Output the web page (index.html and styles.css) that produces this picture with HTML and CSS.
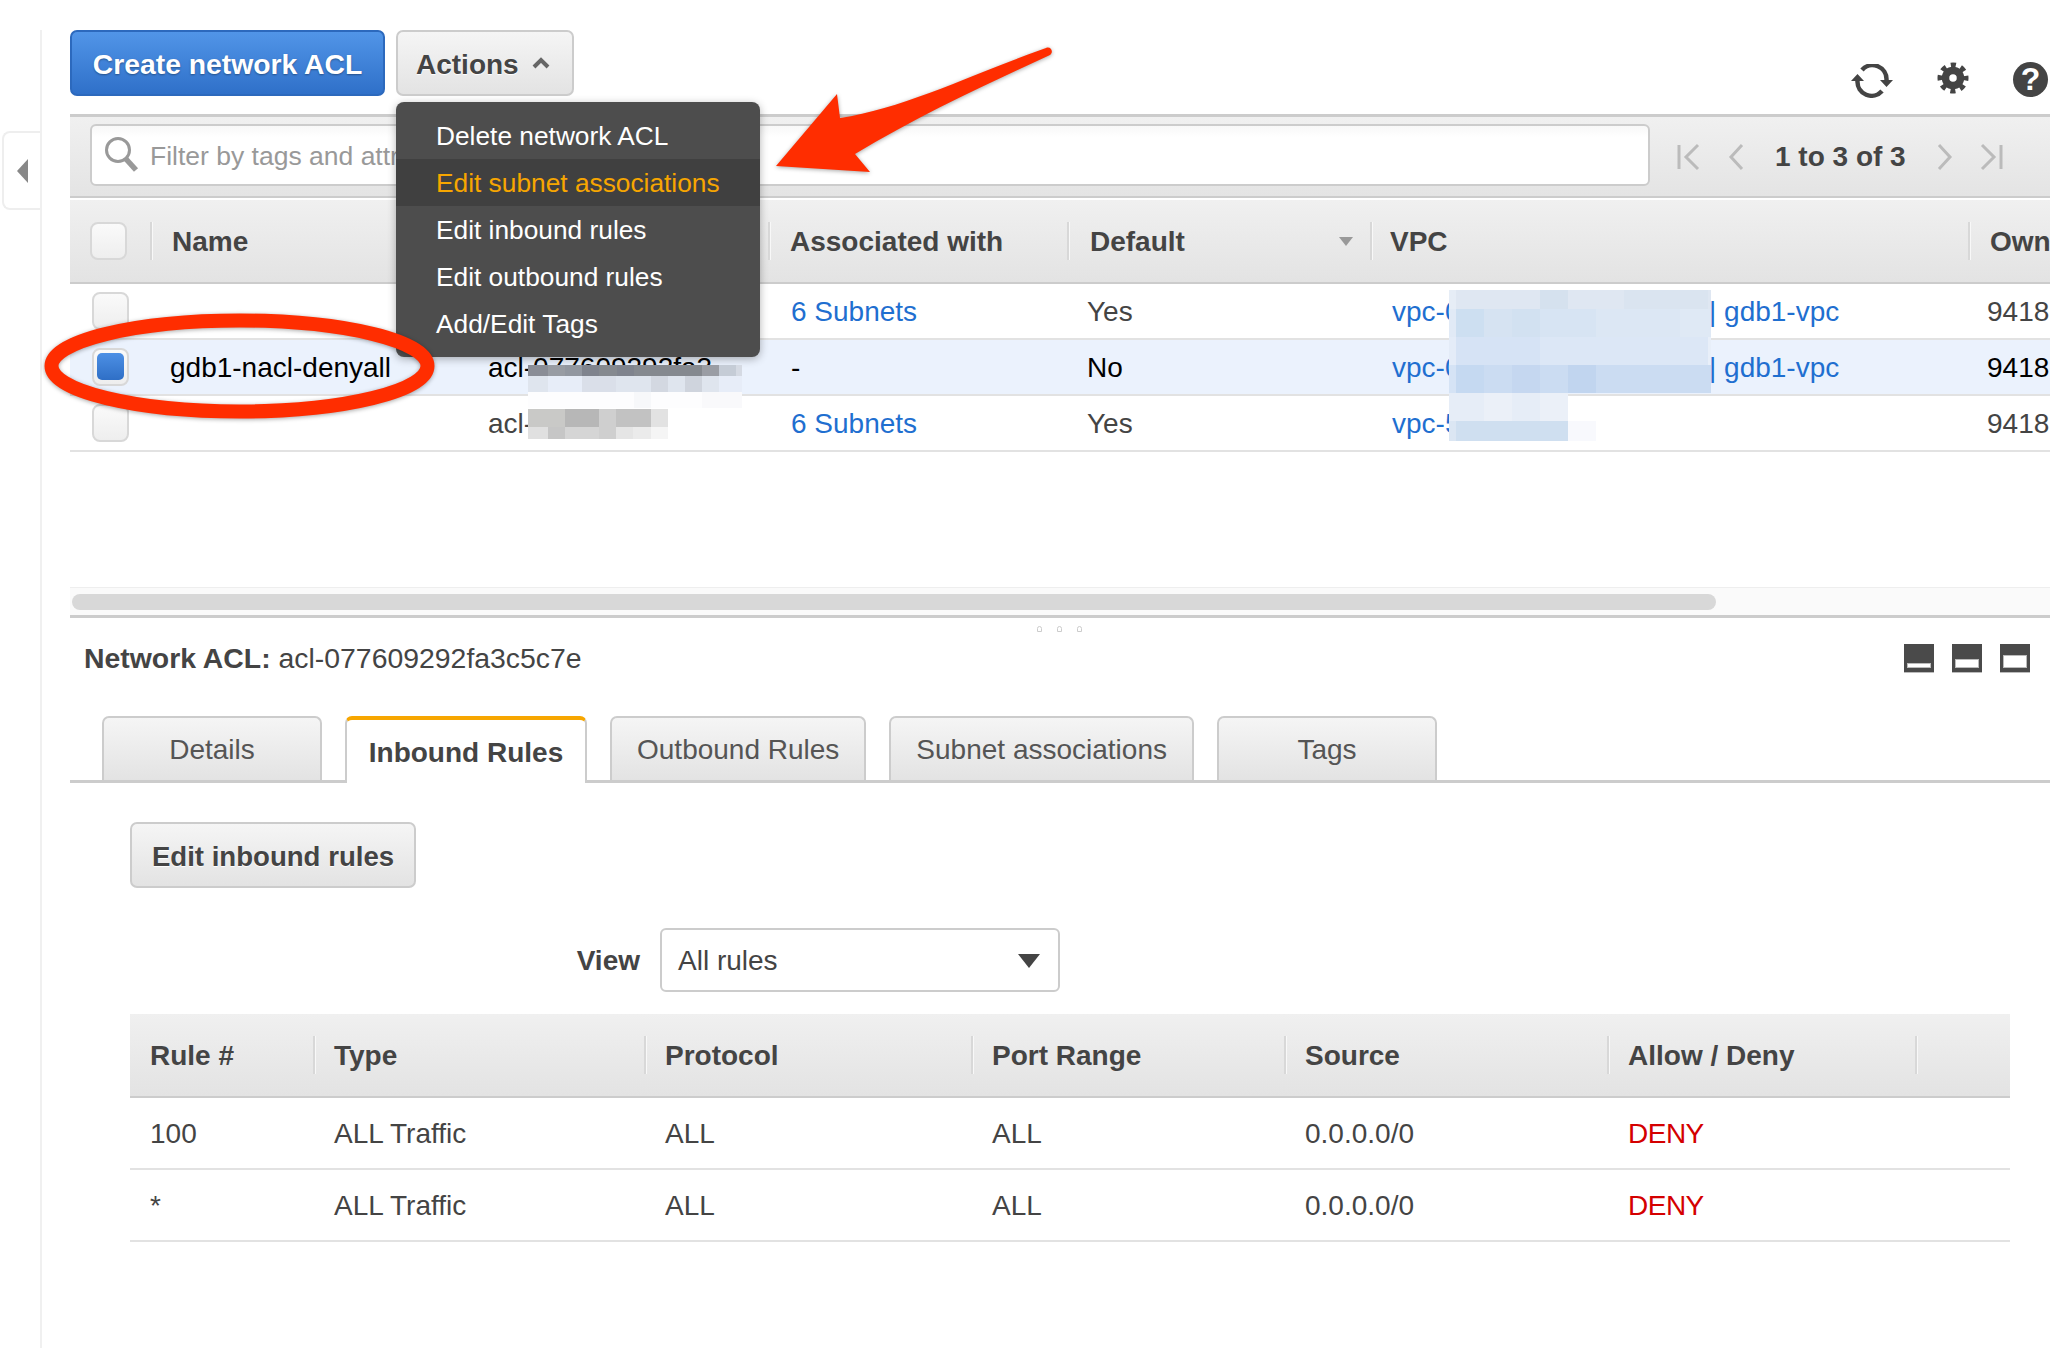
FILE: index.html
```html
<!DOCTYPE html>
<html lang="en">
<head>
  <meta charset="UTF-8">
  <title>Network ACLs</title>
  <link rel="stylesheet" href="styles.css">
</head>
<body>

  <div class="page">
    <aside class="rail">
      <div class="rail-tab"><span class="rail-caret"></span></div>
    </aside>

    <main class="main">
      <div class="top-row">
        <button class="btn btn-primary">Create network ACL</button>
        <div class="actions-wrap">
          <button class="btn btn-actions">Actions
            <svg class="actions-caret" width="18" height="12" viewBox="0 0 18 12"><path d="M2 10 L9 3 L16 10" fill="none" stroke="#666" stroke-width="4"/></svg>
          </button>
          <ul class="menu">
            <li>Delete network ACL</li>
            <li class="menu-active">Edit subnet associations</li>
            <li>Edit inbound rules</li>
            <li>Edit outbound rules</li>
            <li>Add/Edit Tags</li>
          </ul>
        </div>
        <div class="top-icons">
          <svg class="icon-refresh" width="42" height="34" viewBox="0 0 42 34">
            <path d="M6.5 17 A14 14 0 0 0 31 27" fill="none" stroke="#444" stroke-width="4.5"/>
            <path d="M35.5 16 A14 14 0 0 0 11 6" fill="none" stroke="#444" stroke-width="4.5"/>
            <path d="M0 17 L13 17 L6.5 10 Z M29 16 L42 16 L35.5 23 Z" fill="#444"/>
          </svg>
          <svg width="32" height="32" viewBox="0 0 32 32">
            <circle cx="16" cy="16" r="7.5" fill="none" stroke="#444" stroke-width="7.5"/>
            <circle cx="16" cy="16" r="13" fill="none" stroke="#444" stroke-width="5" stroke-dasharray="5.1 5.1" stroke-dashoffset="2.55"/>
          </svg>
          <span class="help-icon">?</span>
        </div>
      </div>

      <div class="filter-bar">
        <div class="filter-box">
          <svg width="36" height="36" viewBox="0 0 36 36">
            <circle cx="14" cy="13" r="11.5" fill="none" stroke="#999" stroke-width="3"/>
            <path d="M22 22 L32 33" stroke="#999" stroke-width="5.5"/>
          </svg>
          <span class="filter-text">Filter by tags and attr</span>
        </div>
        <div class="pager">
          <svg width="24" height="28" viewBox="0 0 24 28"><path d="M2 2 V26 M21 2 L9 14 L21 26" fill="none" stroke="#bbb" stroke-width="3"/></svg>
          <svg class="pager-prev" width="16" height="28" viewBox="0 0 16 28"><path d="M14 2 L3 14 L14 26" fill="none" stroke="#bbb" stroke-width="3"/></svg>
          <span class="pager-text">1 to 3 of 3</span>
          <svg class="pager-next" width="16" height="28" viewBox="0 0 16 28"><path d="M2 2 L13 14 L2 26" fill="none" stroke="#bbb" stroke-width="3"/></svg>
          <svg width="24" height="28" viewBox="0 0 24 28"><path d="M3 2 L15 14 L3 26 M22 2 V26" fill="none" stroke="#bbb" stroke-width="3"/></svg>
        </div>
      </div>

      <div class="acl-wrap">
        <table class="data-table acl-table">
          <colgroup>
            <col class="w80"><col class="w318"><col class="w300"><col class="w299"><col class="w303"><col class="w598"><col class="w200">
          </colgroup>
          <thead>
            <tr>
              <th class="no-rule"><span class="check"></span></th>
              <th>Name</th>
              <th></th>
              <th>Associated with</th>
              <th>Default<span class="sort-caret"></span></th>
              <th>VPC</th>
              <th>Own</th>
            </tr>
          </thead>
          <tbody>
            <tr>
              <td><span class="check"></span></td>
              <td></td>
              <td></td>
              <td><a class="link">6 Subnets</a></td>
              <td>Yes</td>
              <td><a class="link"><span class="vpc-id">vpc-0</span>| gdb1-vpc</a></td>
              <td>9418</td>
            </tr>
            <tr class="row-selected">
              <td><span class="check"><span class="check-mark"></span></span></td>
              <td>gdb1-nacl-denyall</td>
              <td>acl-077609292fa3</td>
              <td>-</td>
              <td>No</td>
              <td><a class="link"><span class="vpc-id">vpc-0</span>| gdb1-vpc</a></td>
              <td>9418</td>
            </tr>
            <tr>
              <td><span class="check"></span></td>
              <td></td>
              <td>acl-</td>
              <td><a class="link">6 Subnets</a></td>
              <td>Yes</td>
              <td><a class="link"><span class="vpc-id">vpc-5</span></a></td>
              <td>9418</td>
            </tr>
          </tbody>
        </table>
      </div>

      <div class="scroll-band"><div class="scroll-thumb"></div></div>
      <div class="grabber"><span></span><span></span><span></span></div>

      <div class="detail-head">
        <div class="detail-title"><b>Network ACL:</b> acl-077609292fa3c5c7e</div>
        <div class="pane-icons">
          <span class="pane-icon"><span class="pane-small"></span></span>
          <span class="pane-icon"><span class="pane-mid"></span></span>
          <span class="pane-icon"><span class="pane-big"></span></span>
        </div>
      </div>

      <div class="tabs">
        <div class="tab">Details</div>
        <div class="tab tab-active">Inbound Rules</div>
        <div class="tab">Outbound Rules</div>
        <div class="tab">Subnet associations</div>
        <div class="tab">Tags</div>
      </div>

      <div class="tab-body">
        <button class="btn btn-edit">Edit inbound rules</button>

        <div class="view-row">
          <label class="view-label">View</label>
          <div class="select">All rules<span class="select-caret"></span></div>
        </div>

        <table class="data-table rules-table">
          <colgroup>
            <col class="w183"><col class="w331"><col class="w327"><col class="w313"><col class="w323"><col class="w308"><col class="w95">
          </colgroup>
          <thead>
            <tr>
              <th class="no-rule">Rule #</th>
              <th>Type</th>
              <th>Protocol</th>
              <th>Port Range</th>
              <th>Source</th>
              <th>Allow / Deny</th>
              <th></th>
            </tr>
          </thead>
          <tbody>
            <tr>
              <td>100</td>
              <td>ALL Traffic</td>
              <td>ALL</td>
              <td>ALL</td>
              <td>0.0.0.0/0</td>
              <td class="deny">DENY</td>
              <td></td>
            </tr>
            <tr>
              <td>*</td>
              <td>ALL Traffic</td>
              <td>ALL</td>
              <td>ALL</td>
              <td>0.0.0.0/0</td>
              <td class="deny">DENY</td>
              <td></td>
            </tr>
          </tbody>
        </table>
      </div>
    </main>
  </div>

  <!-- blurred ids and the red markup drawn on top of the screenshot -->
  <svg class="markup" width="2072" height="1348" viewBox="0 0 2072 1348">
    <g shape-rendering="crispEdges">
      <rect x="528" y="365" width="214" height="11" fill="#85898f"/>
      <rect x="528" y="365" width="20" height="11" fill="#8a8d96"/>
      <rect x="548" y="365" width="17" height="11" fill="#989ca3"/>
      <rect x="565" y="365" width="17" height="11" fill="#9297a0"/>
      <rect x="582" y="365" width="17" height="11" fill="#7f838d"/>
      <rect x="617" y="365" width="17" height="11" fill="#7f838d"/>
      <rect x="702" y="365" width="17" height="11" fill="#9a9da4"/>
      <rect x="719" y="365" width="17" height="11" fill="#c5ccd6"/>
      <rect x="736" y="365" width="6" height="11" fill="#d5dae3"/>
      <rect x="528" y="376" width="214" height="16" fill="#dfe5ee"/>
      <rect x="548" y="376" width="34" height="16" fill="#e7edf8"/>
      <rect x="582" y="376" width="34" height="16" fill="#dadfe9"/>
      <rect x="651" y="376" width="17" height="16" fill="#d3d8e1"/>
      <rect x="685" y="376" width="17" height="16" fill="#cfd4dd"/>
      <rect x="719" y="376" width="23" height="16" fill="#e7edf8"/>
      <rect x="528" y="392" width="214" height="16" fill="#fdfdfe"/>
      <rect x="634" y="392" width="17" height="16" fill="#f7f8fa"/>
      <rect x="702" y="392" width="40" height="16" fill="#f9f9fb"/>

      <rect x="528" y="409" width="37" height="18" fill="#c9c9c7"/>
      <rect x="565" y="409" width="34" height="18" fill="#b7b7b7"/>
      <rect x="599" y="409" width="17" height="18" fill="#cfcfcf"/>
      <rect x="616" y="409" width="35" height="18" fill="#c2c2c2"/>
      <rect x="651" y="409" width="17" height="18" fill="#e2e2e2"/>
      <rect x="528" y="427" width="20" height="12" fill="#e0e0e0"/>
      <rect x="548" y="427" width="17" height="12" fill="#c6c6c6"/>
      <rect x="565" y="427" width="34" height="12" fill="#d5d5d5"/>
      <rect x="599" y="427" width="17" height="12" fill="#cfcfcf"/>
      <rect x="616" y="427" width="17" height="12" fill="#e5e5e5"/>
      <rect x="633" y="427" width="18" height="12" fill="#ebebeb"/>
      <rect x="651" y="427" width="17" height="12" fill="#f5f5f5"/>

      <rect x="1449" y="290" width="262" height="19" fill="#dfe7f2"/>
      <rect x="1449" y="290" width="7" height="19" fill="#e6edf6"/>
      <rect x="1540" y="290" width="28" height="19" fill="#d5e1ee"/>
      <rect x="1624" y="290" width="84" height="19" fill="#dae4f0"/>
      <rect x="1449" y="309" width="262" height="28" fill="#dce7f4"/>
      <rect x="1449" y="309" width="7" height="28" fill="#e1eaf6"/>
      <rect x="1456" y="309" width="28" height="28" fill="#cddff1"/>
      <rect x="1484" y="309" width="28" height="28" fill="#d6e3f2"/>
      <rect x="1512" y="309" width="28" height="28" fill="#d2e1f1"/>
      <rect x="1540" y="309" width="56" height="28" fill="#d7e4f3"/>
      <rect x="1680" y="309" width="31" height="28" fill="#dfe9f5"/>
      <rect x="1449" y="337" width="262" height="28" fill="#dce7f6"/>
      <rect x="1449" y="337" width="7" height="28" fill="#e4ecf8"/>
      <rect x="1456" y="337" width="84" height="28" fill="#d6e3f5"/>
      <rect x="1708" y="337" width="3" height="28" fill="#e8eff9"/>
      <rect x="1449" y="365" width="262" height="28" fill="#cbdcf2"/>
      <rect x="1449" y="365" width="7" height="28" fill="#d5e3f5"/>
      <rect x="1456" y="365" width="28" height="28" fill="#c5d9f1"/>
      <rect x="1512" y="365" width="28" height="28" fill="#c5d7f0"/>
      <rect x="1568" y="365" width="28" height="28" fill="#c1d5ef"/>
      <rect x="1449" y="393" width="119" height="28" fill="#e6edf7"/>
      <rect x="1484" y="393" width="28" height="28" fill="#ebf0f8"/>
      <rect x="1540" y="393" width="28" height="28" fill="#ebf0f8"/>
      <rect x="1449" y="421" width="119" height="20" fill="#cfdff0"/>
      <rect x="1449" y="421" width="7" height="20" fill="#dbe6f3"/>
      <rect x="1568" y="421" width="28" height="20" fill="#f8f9fd"/>
    </g>
    <g class="markup-red">
      <ellipse cx="239.5" cy="366" rx="188" ry="45.5" fill="none" stroke="#ff2d00" stroke-width="14"/>
      <path d="M776 166 L870 172 L855 154 C920 115 985 85 1050 55 C1054 52 1051 46 1046 48 C970 75 905 108 840 118 L837 94 Z" fill="#ff2d00"/>
    </g>
  </svg>

</body>
</html>
```

FILE: styles.css
```css
* {
  box-sizing: border-box;
  margin: 0;
  padding: 0;
}
html, body {
  width: 2072px;
  height: 1348px;
  overflow: hidden;
}
body {
  position: relative;
  background: #fff;
  color: #444;
  font-family: "Liberation Sans", Arial, sans-serif;
  font-size: 28px;
}
.page {
  display: flex;
  height: 1348px;
}

/* left rail */
.rail {
  width: 42px;
  margin-top: 30px;
  border-right: 2px solid #f0f0f0;
  flex-shrink: 0;
}
.rail-tab {
  display: flex;
  align-items: center;
  justify-content: center;
  width: 38px;
  height: 79px;
  margin: 101px 0 0 2px;
  background: #fff;
  border: 2px solid #eee;
  border-right: none;
  border-radius: 8px 0 0 8px;
}
.rail-caret {
  width: 0;
  height: 0;
  border-top: 12px solid transparent;
  border-bottom: 12px solid transparent;
  border-right: 11px solid #888;
}

.main {
  width: 1980px;
  margin-left: 28px;
  padding-top: 30px;
}

/* buttons */
.btn {
  height: 66px;
  padding-top: 3px;
  border-radius: 7px;
  font-family: inherit;
  font-size: 28px;
  font-weight: bold;
  cursor: pointer;
}
.btn-primary {
  width: 315px;
  color: #fff;
  font-size: 28.3px;
  background: linear-gradient(#5195e8, #2f70c9);
  border: 2px solid #2c69bd;
  text-shadow: 0 1px 2px rgba(0,0,0,0.35);
}
.btn-actions, .btn-edit {
  color: #444;
  background: linear-gradient(#f5f5f5, #e3e3e3);
  border: 2px solid #ccc;
  text-shadow: 0 1px 1px #fff;
}

/* top row */
.top-row {
  display: flex;
  height: 84px;
}
.actions-wrap {
  position: relative;
  margin-left: 11px;
}
.btn-actions {
  display: flex;
  align-items: center;
  width: 178px;
  padding-left: 18px;
}
.actions-caret {
  margin-left: 13px;
  margin-top: -4px;
}
.menu {
  position: absolute;
  top: 72px;
  left: 0;
  z-index: 5;
  width: 364px;
  height: 255px;
  padding-top: 10px;
  list-style: none;
  background: #4d4d4d;
  border-radius: 8px;
  box-shadow: 0 2px 8px rgba(0,0,0,0.3);
  color: #fff;
  font-size: 26.3px;
}
.menu li {
  height: 47px;
  line-height: 49px;
  padding-left: 40px;
  white-space: nowrap;
}
.menu-active {
  background: #404040;
  color: #f7a600;
}
.top-icons {
  display: flex;
  align-items: flex-start;
  gap: 44px;
  margin-left: auto;
  margin-top: 32px;
  padding-right: 2px;
}
.icon-refresh {
  margin-top: 2px;
}
.help-icon {
  display: block;
  width: 35px;
  height: 35px;
  border-radius: 50%;
  background: #444;
  color: #fff;
  font-size: 32px;
  font-weight: bold;
  line-height: 35px;
  text-align: center;
}

/* filter bar */
.filter-bar {
  display: flex;
  align-items: center;
  height: 84px;
  padding-left: 20px;
  background: linear-gradient(#f0f0f0, #e4e4e4);
  border-top: 3px solid #ccc;
  border-bottom: 2px solid #ccc;
}
.filter-box {
  display: flex;
  align-items: center;
  width: 1560px;
  height: 62px;
  margin-top: -3px;
  padding-left: 12px;
  background: linear-gradient(#f8f8f8, #fff 20%);
  border: 2px solid #ccc;
  border-radius: 6px;
}
.filter-text {
  margin-left: 10px;
  padding-top: 2px;
  color: #999;
  font-size: 26.5px;
}
.pager {
  display: flex;
  align-items: center;
  margin-left: 27px;
}
.pager-prev {
  margin-left: 27px;
}
.pager-text {
  margin: 0 31px 0 31px;
  padding-top: 1px;
  font-weight: bold;
}
.pager-next {
  margin-right: 26px;
}

/* tables */
.data-table {
  table-layout: fixed;
  border-collapse: collapse;
}
.data-table th, .data-table td {
  padding-left: 21px;
  text-align: left;
  white-space: nowrap;
  overflow: hidden;
}
.data-table th {
  position: relative;
  font-weight: bold;
  background: linear-gradient(#f0f0f0, #e3e3e3);
  border-bottom: 2px solid #ccc;
}
.data-table th::before {
  content: "";
  position: absolute;
  left: 0;
  top: 50%;
  width: 2px;
  height: 38px;
  margin-top: -19px;
  background: #d8d8d8;
  border-right: 1px solid #f8f8f8;
}
.data-table th.no-rule::before {
  display: none;
}
.data-table td {
  border-bottom: 2px solid #e2e2e2;
}
.w80 { width: 80px; }
.w318 { width: 318px; }
.w300 { width: 300px; }
.w299 { width: 299px; }
.w303 { width: 303px; }
.w598 { width: 598px; }
.w200 { width: 200px; }
.w183 { width: 183px; }
.w331 { width: 331px; }
.w327 { width: 327px; }
.w313 { width: 313px; }
.w323 { width: 323px; }
.w308 { width: 308px; }
.w95 { width: 95px; }

.acl-wrap {
  height: 387px;
  margin-top: 2px;
  overflow: hidden;
}
.acl-table {
  width: 2098px;
}
.acl-table thead tr {
  height: 83px;
}
.acl-table tbody tr {
  height: 56px;
}
.acl-table th {
  padding-top: 2px;
  padding-left: 22px;
}
.acl-table th:first-child {
  padding-top: 0;
  padding-left: 20px;
}
.acl-table th:nth-child(5) {
  padding-left: 23px;
}
.acl-table th:nth-child(6) {
  padding-left: 20px;
}
.acl-table td {
  padding-top: 2px;
}
.acl-table td:first-child {
  padding-top: 0;
  padding-left: 22px;
}
.acl-table td:nth-child(2) {
  padding-left: 20px;
}
.acl-table td:nth-child(3) {
  padding-left: 20px;
}
.acl-table td:nth-child(4) {
  padding-left: 23px;
}
.acl-table td:nth-child(5) {
  padding-left: 20px;
}
.acl-table td:nth-child(6) {
  padding-left: 22px;
}
.acl-table td:nth-child(7) {
  padding-left: 19px;
}
.acl-table .check {
  vertical-align: middle;
}
.row-selected td {
  background: #ebf2fd;
  color: #000;
}
.link {
  color: #1f6fd0;
}
.vpc-id {
  display: inline-block;
  width: 317px;
}
.sort-caret {
  position: absolute;
  right: 17px;
  top: 37px;
  width: 0;
  height: 0;
  border-left: 7px solid transparent;
  border-right: 7px solid transparent;
  border-top: 9px solid #999;
}
.check {
  display: inline-block;
  position: relative;
  width: 37px;
  height: 38px;
  background: linear-gradient(#fafafa, #eee);
  border: 2px solid #d8d8d8;
  border-radius: 8px;
}
.check-mark {
  display: block;
  width: 27px;
  height: 27px;
  margin: 3px auto;
  border-radius: 5px;
  background: linear-gradient(#4d90e5, #2f6fc6);
}

/* scrollbar and splitter */
.scroll-band {
  height: 31px;
  padding-top: 6px;
  background: #fafafa;
  border-bottom: 3px solid #ccc;
  border-top: 1px solid #eee;
}
.scroll-thumb {
  width: 1644px;
  height: 16px;
  margin-left: 2px;
  background: #d8d8d8;
  border-radius: 8px;
}
.grabber {
  display: flex;
  justify-content: center;
  gap: 15px;
  height: 18px;
  padding: 8px 2px 0 0;
}
.grabber span {
  width: 5px;
  height: 6px;
  border: 1px solid #ccc;
  border-radius: 3px 3px 0 0;
}

/* lower pane */
.detail-head {
  display: flex;
  align-items: center;
  justify-content: space-between;
  height: 44px;
  padding: 0 20px 0 14px;
}
.detail-title {
  font-size: 28.4px;
}
.pane-icons {
  display: flex;
  gap: 18px;
}
.pane-icon {
  display: flex;
  align-items: flex-end;
  justify-content: center;
  width: 30px;
  height: 29px;
  padding-bottom: 4px;
  background: #4a4a4a;
  border-bottom: 1px solid #bbb;
}
.pane-icon span {
  display: block;
  width: 24px;
  background: #fff;
  border: 1px solid #bbb;
}
.pane-small { height: 5px; }
.pane-mid { height: 9px; }
.pane-big { height: 13px; }

.tabs {
  display: flex;
  align-items: flex-end;
  gap: 23px;
  height: 67px;
  margin-top: 36px;
  padding-left: 32px;
  border-bottom: 3px solid #ccc;
}
.tab {
  display: flex;
  align-items: center;
  justify-content: center;
  min-width: 220px;
  height: 64px;
  padding: 2px 25px 0;
  background: linear-gradient(#f5f5f5, #e3e3e3);
  border: 2px solid #ccc;
  border-bottom: none;
  border-radius: 7px 7px 0 0;
  color: #555;
  white-space: nowrap;
}
.tab-active {
  width: 242px;
  min-width: 242px;
  height: 67px;
  margin-bottom: -3px;
  padding: 3px 0 0;
  background: #fff;
  border-top: 4px solid #f7a600;
  color: #444;
  font-weight: bold;
}
.tab-body {
  padding: 39px 0 0 60px;
}
.btn-edit {
  display: block;
  width: 286px;
  font-size: 27.6px;
}
.view-row {
  display: flex;
  align-items: center;
  gap: 20px;
  margin-top: 40px;
}
.view-label {
  width: 510px;
  padding-top: 2px;
  font-weight: bold;
  text-align: right;
}
.select {
  display: flex;
  align-items: center;
  justify-content: space-between;
  width: 400px;
  height: 64px;
  padding: 2px 18px 0 16px;
  border: 2px solid #ccc;
  border-radius: 6px;
}
.select-caret {
  width: 0;
  height: 0;
  border-left: 11px solid transparent;
  border-right: 11px solid transparent;
  border-top: 14px solid #444;
}
.rules-table {
  width: 1880px;
  margin-top: 22px;
}
.rules-table thead tr {
  height: 83px;
}
.rules-table tbody tr {
  height: 72px;
}
.rules-table th:first-child, .rules-table td:first-child {
  padding-left: 20px;
}
.rules-table th {
  padding-top: 2px;
}
.rules-table td {
  padding-top: 2px;
}
.deny {
  color: #d40000;
  letter-spacing: -0.5px;
}

/* red arrow and ring, blurred ids */
.markup {
  position: absolute;
  left: 0;
  top: 0;
  z-index: 10;
  pointer-events: none;
}
.markup-red {
  filter: drop-shadow(0 1px 2px rgba(0,0,0,0.35));
}
```
